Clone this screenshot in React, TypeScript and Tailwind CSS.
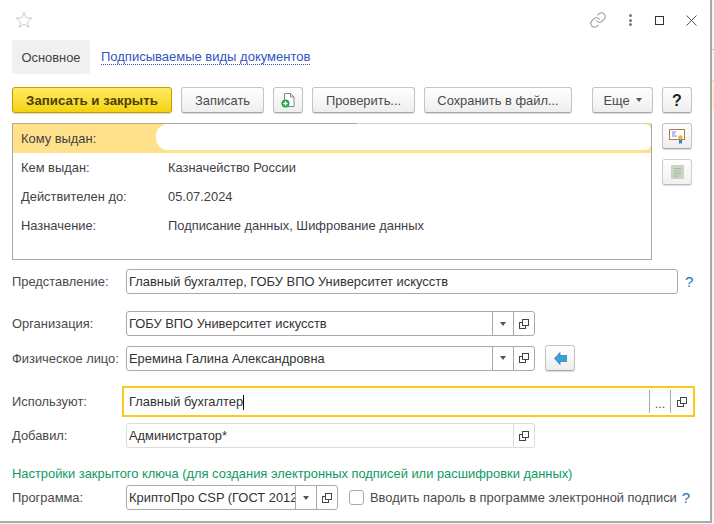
import type { ReactNode } from 'react'

const textColor = 'text-[#4a4a4a]'

function Btn({ children, className = '', yellow = false }: { children: ReactNode; className?: string; yellow?: boolean }) {
  const skin = yellow
    ? 'border-[#bfa000] from-[#ffe95f] to-[#f5d300]'
    : 'border-[#c4c4c4] border-b-[#a8a8a8] from-white to-[#eeeeee]'
  return (
    <div className={`flex h-[26px] items-center justify-center rounded-[3px] border bg-gradient-to-b shadow-[0_1px_1px_rgba(0,0,0,0.15)] ${skin} ${className}`}>
      {children}
    </div>
  )
}

function OpenIcon() {
  return (
    <svg width="10" height="10" viewBox="0 0 10 10" fill="none" stroke="#444" strokeWidth="1" shapeRendering="crispEdges">
      <rect x="3.5" y="0.5" width="6" height="6" />
      <path d="M3 3.5H0.5V9.5H6.5V7" />
    </svg>
  )
}

function Caret() {
  return (
    <svg width="6" height="4" viewBox="0 0 6 4" fill="#555">
      <path d="M0 0h6L3 4z" />
    </svg>
  )
}

function Cell({ children, border }: { children: ReactNode; border: string }) {
  return <div className={`flex h-full w-[21px] shrink-0 items-center justify-center border-l ${border}`}>{children}</div>
}

function Field({
  value,
  width,
  caret = false,
  light = false,
}: {
  value: string
  width: string
  caret?: boolean
  light?: boolean
}) {
  const border = light ? 'border-[#dcdcdc]' : 'border-[#a9a9a9]'
  return (
    <div className={`flex h-[25px] items-center rounded-[3px] border ${border} ${width}`}>
      <div className="min-w-0 flex-1 overflow-hidden whitespace-nowrap pl-[2px] leading-[17px] text-[#333]">{value}</div>
      {caret && (
        <Cell border={border}>
          <Caret />
        </Cell>
      )}
      <Cell border={border}>
        <OpenIcon />
      </Cell>
    </div>
  )
}

function Row({ label, children, className = '' }: { label: string; children: ReactNode; className?: string }) {
  return (
    <div className={`flex items-center ${className}`}>
      <div className={`w-[114px] shrink-0 ${textColor}`}>{label}</div>
      {children}
    </div>
  )
}

function InfoRow({ label, value }: { label: string; value: string }) {
  return (
    <div className="flex h-[29px] items-center pl-2">
      <div className="w-[147px] shrink-0 text-[#3f3f46]">{label}</div>
      <div className="text-[#3f3f46]">{value}</div>
    </div>
  )
}

function Help() {
  return <span className="text-[15px] text-[#1b78b8]">?</span>
}

export default function App() {
  return (
    <div className="flex h-[524px] w-[714px] overflow-hidden bg-[#f4f4f4] font-['Liberation_Sans',Arial,sans-serif] text-[12.9px] leading-[13px]">
      <div className="flex h-[523px] w-[712px] shrink-0 flex-col border-r-2 border-b-2 border-[#a9a9a9] bg-white px-3">
        {/* title bar */}
        <div className="flex h-[40px] shrink-0 items-center justify-between">
          <svg width="18" height="18" viewBox="0 0 18 18" fill="none" stroke="#c9cdd2" strokeWidth="1" className="ml-[3px]">
            <path d="M9 1.5l2.2 5.2 5.6.5-4.3 3.6 1.3 5.5L9 13.3l-4.8 3 1.3-5.5L1.2 7.2l5.6-.5z" />
          </svg>
          <div className="mr-px flex items-center">
            <svg width="18" height="18" viewBox="0 0 24 24" fill="none" stroke="#9a9a9a" strokeWidth="1.4" strokeLinecap="round">
              <path d="M10 13a5 5 0 0 0 7.5.5l3-3a5 5 0 0 0-7-7l-1.7 1.7" />
              <path d="M14 11a5 5 0 0 0-7.5-.5l-3 3a5 5 0 0 0 7 7l1.7-1.7" />
            </svg>
            <div className="ml-[22px] flex flex-col gap-[1.5px]">
              <span className="h-[3px] w-[3px] rounded-full bg-[#777]" />
              <span className="h-[3px] w-[3px] rounded-full bg-[#777]" />
              <span className="h-[3px] w-[3px] rounded-full bg-[#777]" />
            </div>
            <div className="ml-[23px] h-[9px] w-[9px] border border-[#333]" />
            <svg width="11" height="11" viewBox="0 0 11 11" stroke="#555" strokeWidth="1" className="ml-[22px]">
              <path d="M0.5 0.5l10 10M10.5 0.5l-10 10" />
            </svg>
          </div>
        </div>

        {/* tabs */}
        <div className="flex h-[34px] shrink-0 items-center">
          <div className="flex h-[34px] w-[78px] items-center justify-center rounded-[3px] bg-[#f0f0f0] text-[#444]">Основное</div>
          <div className="ml-[11px] border-b border-dotted border-[#2f55c0] pb-[1px] text-[13px] text-[#2f55c0]">Подписываемые виды документов</div>
        </div>

        {/* command bar */}
        <div className="mt-[13px] flex shrink-0">
          <Btn yellow className="w-[160px] text-[13.3px] font-bold text-[#4a4200]">
            Записать и закрыть
          </Btn>
          <Btn className={`ml-[9px] w-[83px] ${textColor}`}>Записать</Btn>
          <Btn className="ml-[9px] w-[30px]">
            <svg width="14" height="15" viewBox="0 0 14 15" fill="none">
              <path d="M3.5 0.5h6l3.5 3.5v9.5h-9.5z" fill="#fff" stroke="#7d8a99" />
              <path d="M9.5 0.5v3.5h3.5" stroke="#7d8a99" />
              <circle cx="4.5" cy="10.5" r="4" fill="#27a744" />
              <path d="M4.5 8.3v4.4M2.3 10.5h4.4" stroke="#fff" strokeWidth="1.3" />
            </svg>
          </Btn>
          <Btn className={`ml-[9px] w-[103px] ${textColor}`}>Проверить...</Btn>
          <Btn className={`ml-[9px] w-[148px] ${textColor}`}>Сохранить в файл...</Btn>
          <Btn className={`ml-[20px] w-[61px] gap-[6px] ${textColor}`}>
            Еще
            <Caret />
          </Btn>
          <Btn className="ml-[9px] w-[30px] text-[16px] font-bold text-[#222]">?</Btn>
        </div>

        {/* certificate */}
        <div className="mt-[10px] flex shrink-0 items-start">
          <div className="h-[137px] w-[640px] border-x border-b border-[#a9a9a9]">
            <div className="-mx-px flex h-px">
              <div className="w-[345px] bg-[#a9a9a9]" />
              <div className="flex-1 bg-[#d2d2d2]" />
            </div>
            <div className="flex h-[29px] items-start bg-[#ffe18c] pl-2">
              <div className="w-[135px] shrink-0 self-center text-[#3f3f46]">Кому выдан:</div>
              <div className="h-[26px] flex-1 rounded-l-[12px] rounded-r-[6px] bg-white" />
            </div>
            <InfoRow label="Кем выдан:" value="Казначейство России" />
            <InfoRow label="Действителен до:" value="05.07.2024" />
            <InfoRow label="Назначение:" value="Подписание данных, Шифрование данных" />
          </div>
          <div className="ml-[10px] flex flex-col gap-[10px]">
            <Btn className="w-[30px]">
              <svg width="16" height="16" viewBox="0 0 16 16" fill="none">
                <rect x="0.5" y="1.5" width="15" height="10" fill="#fff" stroke="#a8814f" />
                <path d="M3 4h4M3 6h3M3 8h5" stroke="#7a7fd0" />
                <path d="M10 10h3v6l-1.5-1-1.5 1z" fill="#2f87c9" />
                <circle cx="11.5" cy="9.5" r="2.2" fill="#f5b32e" />
              </svg>
            </Btn>
            <Btn className="w-[30px] opacity-80">
              <svg width="13" height="14" viewBox="0 0 13 14">
                <rect width="13" height="14" rx="1" fill="#bccbb5" />
                <path d="M3 3.5h7M3 6h7M3 8.5h7M3 11h5" stroke="#93a48d" />
              </svg>
            </Btn>
          </div>
        </div>

        {/* fields */}
        <Row label="Представление:" className="mt-[9px]">
          <div className="flex h-[25px] w-[552px] items-center rounded-[3px] border border-[#a9a9a9] pl-[2px] text-[#333]">Главный бухгалтер, ГОБУ ВПО Университет искусств</div>
          <span className="ml-[7px]">
            <Help />
          </span>
        </Row>
        <Row label="Организация:" className="mt-[17px]">
          <Field value="ГОБУ ВПО Университет искусств" width="w-[409px]" caret />
        </Row>
        <Row label="Физическое лицо:" className="mt-[9px]">
          <Field value="Еремина Галина Александровна" width="w-[409px]" caret />
          <Btn className="ml-[10px] w-[30px]">
            <svg width="13" height="13" viewBox="0 0 13 13">
              <path d="M0.5 6.5L6 0.5V3.5H12.5V9.5H6V12.5Z" fill="#3d9fdc" stroke="#2a78ad" strokeWidth="0.7" />
            </svg>
          </Btn>
        </Row>
        <Row label="Используют:" className="mt-[15px]">
          <div className="-ml-[4px] flex h-[31px] w-[573px] items-center border-2 border-[#f9c91c] pl-[5px] text-[#333]">
            <div className="flex-1">
              Главный бухгалтер<span className="-my-[4px] inline-block h-[15px] w-px bg-black" />
            </div>
            <div className="flex h-[23px] w-[21px] items-center justify-center border-l border-[#a9a9a9] pt-[4px] text-[#555]">...</div>
            <div className="flex h-[23px] w-[23px] items-center justify-center border-l border-[#a9a9a9]">
              <OpenIcon />
            </div>
          </div>
        </Row>
        <Row label="Добавил:" className="mt-[6px]">
          <Field value="Администратор*" width="w-[409px]" light />
        </Row>
        <div className="mt-[19px] text-[#0e9a62]">Настройки закрытого ключа (для создания электронных подписей или расшифровки данных)</div>
        <Row label="Программа:" className="mt-[5px]">
          <Field value="КриптоПро CSP (ГОСТ 2012/256)" width="w-[212px]" caret />
          <div className="ml-[11px] h-[15px] w-[15px] rounded-[3px] border border-[#a9a9a9]" />
          <span className={`ml-[6px] ${textColor}`}>Вводить пароль в программе электронной подписи</span>
          <span className="ml-[5px]">
            <Help />
          </span>
        </Row>
      </div>

      {/* edge of the window behind */}
      <div className="flex flex-1 flex-col">
        <div className="h-[50px] border-b border-[#c8c8c8]" />
        <div className="h-[31px] border-b border-[#d8d8d8]" />
        <div className="h-[28px] bg-[#fbeec4]" />
      </div>
    </div>
  )
}
